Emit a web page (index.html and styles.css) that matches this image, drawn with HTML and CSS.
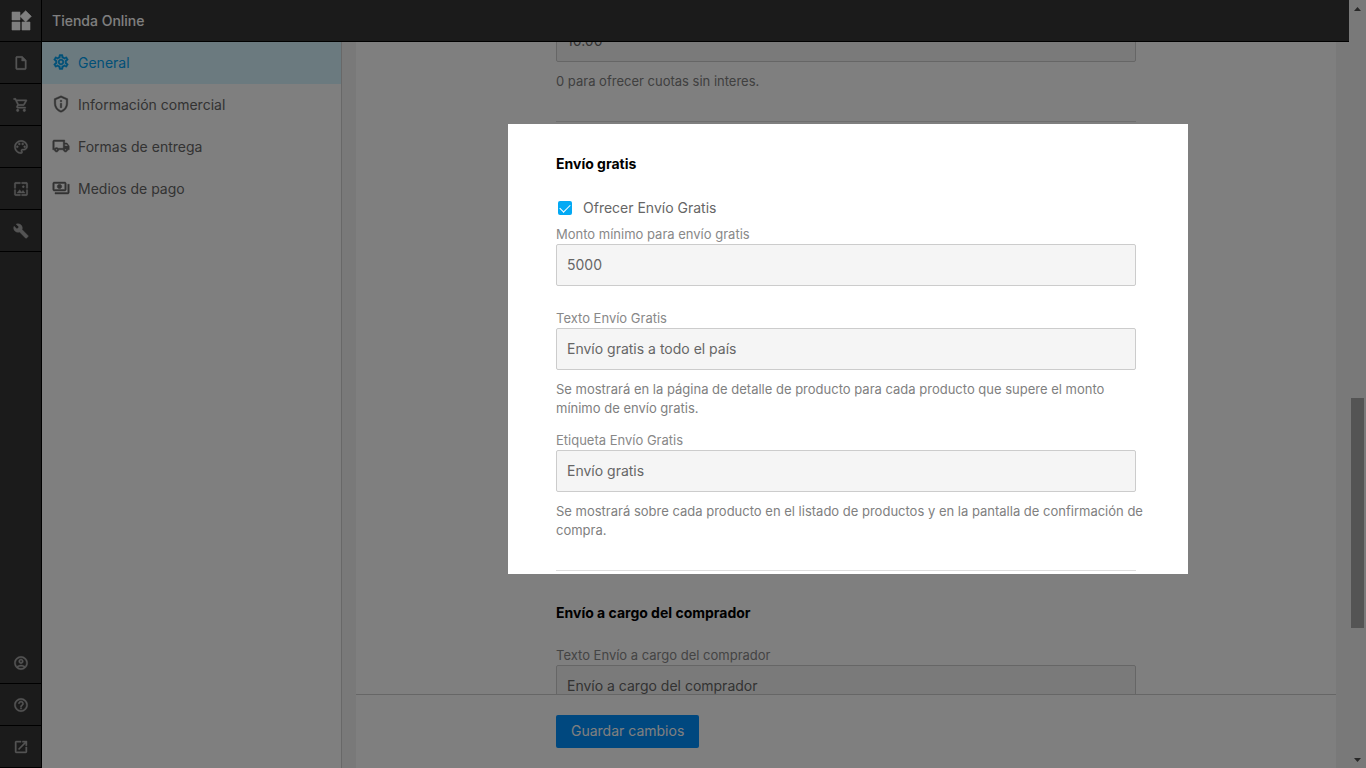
FILE: index.html
```html
<!DOCTYPE html>
<html lang="es">
<head>
<meta charset="utf-8">
<title>Tienda Online</title>
<link rel="stylesheet" href="styles.css">
</head>
<body>
<div class="app">
  <nav class="rail" aria-label="Secciones">
    <a class="rail-item logo" href="#" aria-label="Inicio"><svg viewBox="0 0 24 24"><path d="M13 13v8h8v-8h-8zM3 21h8v-8H3v8zM3 3v8h8V3H3zm13.660-1.310L11 7.340 16.660 13l5.660-5.660-5.660-5.650z"/></svg></a>
    <a class="rail-item" href="#" aria-label="Páginas"><svg viewBox="0 0 24 24"><path d="M14 2H6c-1.100 0-1.990.900-1.990 2L4 20c0 1.100.890 2 1.990 2H18c1.100 0 2-.900 2-2V8l-6-6zM6 20V4h7v5h5v11H6z"/></svg></a>
    <a class="rail-item" href="#" aria-label="Tienda"><svg viewBox="0 0 24 24"><path d="M15.550 13c.750 0 1.410-.410 1.750-1.030l3.580-6.490c.370-.660-.110-1.480-.870-1.480H5.210l-.940-2H1v2h2l3.600 7.590-1.350 2.440C4.520 15.370 5.480 17 7 17h12v-2H7l1.100-2h7.450zM6.160 6h12.150l-2.760 5H8.530L6.160 6zM7 18c-1.100 0-1.990.900-1.990 2S5.900 22 7 22s2-.900 2-2-.900-2-2-2zm10 0c-1.100 0-1.990.900-1.990 2s.890 2 1.990 2 2-.900 2-2-.900-2-2-2z"/></svg></a>
    <a class="rail-item" href="#" aria-label="Diseño"><svg viewBox="0 0 24 24"><path d="M12 22C6.490 22 2 17.510 2 12S6.490 2 12 2s10 4.040 10 9c0 3.310-2.690 6-6 6h-1.770c-.280 0-.500.220-.500.500 0 .120.050.230.130.330.410.470.640 1.060.640 1.670A2.500 2.500 0 0 1 12 22zm0-18c-4.410 0-8 3.590-8 8s3.590 8 8 8c.280 0 .500-.220.500-.500a.54.54 0 0 0-.140-.350c-.410-.460-.630-1.050-.630-1.650a2.500 2.500 0 0 1 2.500-2.500H16c2.210 0 4-1.790 4-4 0-3.860-3.590-7-8-7z"/><circle cx="6.500" cy="11.500" r="1.500"/><circle cx="9.500" cy="7.500" r="1.500"/><circle cx="14.500" cy="7.500" r="1.500"/><circle cx="17.500" cy="11.500" r="1.500"/></svg></a>
    <a class="rail-item" href="#" aria-label="Imágenes"><svg viewBox="0 0 24 24"><path d="M4 4h7V2H4c-1.100 0-2 .900-2 2v7h2V4zm6 9-4 5h12l-3-4-2.030 2.710L10 13zm7-4.500c0-.830-.670-1.500-1.500-1.500S14 7.670 14 8.500s.670 1.500 1.500 1.500S17 9.330 17 8.500zM20 2h-7v2h7v7h2V4c0-1.100-.900-2-2-2zm0 18h-7v2h7c1.100 0 2-.900 2-2v-7h-2v7zM4 13H2v7c0 1.100.900 2 2 2h7v-2H4v-7z"/></svg></a>
    <a class="rail-item" href="#" aria-label="Herramientas"><svg viewBox="0 0 24 24"><path d="M22.700 19l-9.100-9.100c.900-2.300.400-5-1.500-6.900-2-2-5-2.400-7.400-1.300L9 6 6 9 1.600 4.700C.400 7.100.900 10.100 2.900 12.100c1.900 1.900 4.600 2.400 6.900 1.500l9.100 9.100c.400.400 1 .400 1.400 0l2.300-2.300c.500-.400.500-1.100.100-1.400z"/></svg></a>
    <a class="rail-item rail-push" href="#" aria-label="Cuenta"><svg viewBox="0 0 24 24"><path d="M12 2C6.480 2 2 6.480 2 12s4.480 10 10 10 10-4.480 10-10S17.520 2 12 2zM7.350 18.500C8.660 17.560 10.260 17 12 17s3.340.560 4.650 1.500C15.340 19.440 13.740 20 12 20s-3.340-.560-4.650-1.500zm10.790-1.380C16.450 15.800 14.320 15 12 15s-4.450.800-6.140 2.120C4.700 15.730 4 13.950 4 12c0-4.420 3.580-8 8-8s8 3.580 8 8c0 1.950-.700 3.730-1.860 5.120zM12 6c-1.930 0-3.500 1.570-3.500 3.500S10.070 13 12 13s3.500-1.570 3.500-3.500S13.930 6 12 6zm0 5c-.830 0-1.500-.670-1.500-1.500S11.170 8 12 8s1.500.670 1.500 1.500S12.830 11 12 11z"/></svg></a>
    <a class="rail-item" href="#" aria-label="Ayuda"><svg viewBox="0 0 24 24"><path d="M11 18h2v-2h-2v2zm1-16C6.480 2 2 6.480 2 12s4.480 10 10 10 10-4.480 10-10S17.520 2 12 2zm0 18c-4.410 0-8-3.590-8-8s3.590-8 8-8 8 3.590 8 8-3.590 8-8 8zm0-14c-2.210 0-4 1.790-4 4h2c0-1.100.900-2 2-2s2 .900 2 2c0 2-3 1.750-3 5h2c0-2.250 3-2.500 3-5 0-2.210-1.790-4-4-4z"/></svg></a>
    <a class="rail-item" href="#" aria-label="Ver sitio"><svg viewBox="0 0 24 24"><path d="M19 19H5V5h7V3H5a2 2 0 0 0-2 2v14a2 2 0 0 0 2 2h14c1.100 0 2-.900 2-2v-7h-2v7zM14 3v2h3.590l-9.830 9.830 1.410 1.410L19 6.410V10h2V3h-7z"/></svg></a>
  </nav>

  <div class="shell">
    <header class="topbar"><h1 class="topbar-title">Tienda Online</h1></header>
    <div class="columns">
      <nav class="menu" aria-label="Tienda Online">
        <a class="menu-item active" href="#"><svg viewBox="0 0 24 24"><path d="M19.430 12.980c.040-.320.070-.640.070-.980s-.030-.660-.070-.980l2.110-1.650c.190-.150.240-.420.120-.640l-2-3.460c-.120-.220-.390-.300-.610-.220l-2.490 1c-.520-.400-1.080-.730-1.690-.980l-.380-2.650C14.460 2.180 14.250 2 14 2h-4c-.250 0-.460.180-.490.420l-.380 2.650c-.610.250-1.170.590-1.690.980l-2.490-1c-.230-.090-.490 0-.610.220l-2 3.460c-.130.220-.070.490.120.640l2.110 1.650c-.040.320-.070.650-.070.980s.030.660.070.980l-2.110 1.650c-.190.150-.240.420-.120.640l2 3.460c.120.220.390.300.610.220l2.490-1c.520.400 1.080.730 1.690.980l.380 2.650c.030.240.240.420.490.420h4c.250 0 .460-.180.490-.420l.380-2.650c.610-.250 1.170-.590 1.690-.980l2.490 1c.230.090.490 0 .610-.220l2-3.460c.120-.220.070-.490-.120-.640l-2.110-1.650zm-1.980-1.710c.040.310.050.520.050.730s-.020.430-.050.730l-.140 1.130 1.970 1.540-.700 1.210-2.310-.930-.900.680c-.430.320-.840.560-1.250.730l-1.060.430-.360 2.480h-1.400l-.350-2.480-1.060-.430c-.430-.180-.830-.410-1.230-.710l-.910-.700-2.310.930-.700-1.210 1.970-1.540-.140-1.130c-.030-.310-.050-.540-.050-.740s.020-.430.050-.730l.140-1.130-1.970-1.540.700-1.210 2.310.930.900-.680c.430-.320.840-.560 1.250-.730l1.060-.430.360-2.480h1.400l.350 2.480 1.060.430c.430.180.830.410 1.230.710l.910.700 2.310-.930.700 1.210-1.970 1.540.130 1.130zM12 8c-2.210 0-4 1.790-4 4s1.790 4 4 4 4-1.790 4-4-1.790-4-4-4zm0 6c-1.100 0-2-.900-2-2s.900-2 2-2 2 .900 2 2-.900 2-2 2z"/></svg>General</a>
        <a class="menu-item" href="#"><svg viewBox="0 0 24 24"><path d="M12 1 3 5v6c0 5.550 3.840 10.740 9 12 5.160-1.260 9-6.450 9-12V5l-9-4zm7 10c0 4.520-2.980 8.690-7 9.930-4.020-1.240-7-5.410-7-9.930V6.300l7-3.110 7 3.110V11zm-8 0h2v6h-2zm0-4h2v2h-2z"/></svg>Información comercial</a>
        <a class="menu-item" href="#"><svg viewBox="0 0 24 24"><path d="M20 8h-3V4H3c-1.100 0-2 .900-2 2v11h2c0 1.660 1.340 3 3 3s3-1.340 3-3h6c0 1.660 1.340 3 3 3s3-1.340 3-3h2v-5l-3-4zm-.500 1.500 1.960 2.500H17V9.500h2.500zM6 18c-.550 0-1-.450-1-1s.450-1 1-1 1 .450 1 1-.450 1-1 1zm2.220-3c-.550-.610-1.330-1-2.220-1s-1.670.390-2.220 1H3V6h12v9H8.220zM18 18c-.550 0-1-.450-1-1s.450-1 1-1 1 .450 1 1-.450 1-1 1z"/></svg>Formas de entrega</a>
        <a class="menu-item" href="#"><svg viewBox="0 0 24 24"><path d="M19 14V6c0-1.100-.900-2-2-2H3c-1.100 0-2 .900-2 2v8c0 1.100.900 2 2 2h14c1.100 0 2-.900 2-2zm-2 0H3V6h14v8zm-7-7c-1.660 0-3 1.340-3 3s1.340 3 3 3 3-1.340 3-3-1.340-3-3-3zm13 0v11c0 1.100-.900 2-2 2H4v-2h17V7h2z"/></svg>Medios de pago</a>
      </nav>

      <main class="content">
        <form class="card">
          <div class="scroll">
            <div class="fields">
              <div class="group scrolled">
                <input class="input" type="text" value="10.00" aria-label="Interés">
                <p class="help">0 para ofrecer cuotas sin interes.</p>
              </div>
              <section class="group">
                <h2 class="title">Envío gratis</h2>
                <label class="check"><input class="box" type="checkbox" checked>Ofrecer Envío Gratis</label>
                <label class="label" for="monto">Monto mínimo para envío gratis</label>
                <input class="input" id="monto" type="text" value="5000">
                <label class="label spaced" for="texto">Texto Envío Gratis</label>
                <input class="input" id="texto" type="text" value="Envío gratis a todo el país">
                <p class="help">Se mostrará en la página de detalle de producto para cada producto que supere el monto mínimo de envío gratis.</p>
                <label class="label after-help" for="etiqueta">Etiqueta Envío Gratis</label>
                <input class="input" id="etiqueta" type="text" value="Envío gratis">
                <p class="help">Se mostrará sobre cada producto en el listado de productos y en la pantalla de confirmación de compra.</p>
              </section>
              <section class="group">
                <h2 class="title">Envío a cargo del comprador</h2>
                <label class="label" for="cargo">Texto Envío a cargo del comprador</label>
                <input class="input" id="cargo" type="text" value="Envío a cargo del comprador">
              </section>
            </div>
          </div>
          <footer class="actions"><div class="actions-inner"><button class="save" type="button">Guardar cambios</button></div></footer>
        </form>
      </main>
    </div>
  </div>

  <div class="scrollbar" aria-hidden="true">
    <span class="arrow up"></span>
    <span class="track"><span class="thumb"></span></span>
    <span class="arrow down"></span>
  </div>
</div>
<div class="spotlight" aria-hidden="true"></div>
</body>
</html>
```

FILE: styles.css
```css
* { box-sizing: border-box; }

body {
  margin: 0;
  font-family: Inter, "Liberation Sans", sans-serif;
  font-size: 14px;
  color: #666;
  overflow: hidden;
}

h1, h2, p { margin: 0; }
a { color: inherit; text-decoration: none; }
svg {
  display: block;
  flex: none;
  fill: currentColor;
  stroke: currentColor;
  stroke-width: .6;
}

.app { display: flex; height: 100vh; background: #f2f2f2; }

/* Icon rail */
.rail {
  display: flex;
  flex-direction: column;
  flex: none;
  width: 42px;
  background: #363636;
  border-right: 1px solid #000;
  color: #a8a8a8;
}
.rail-item {
  display: flex;
  align-items: center;
  justify-content: center;
  height: 42px;
  border-bottom: 1px solid #000;
}
.rail-item svg { width: 16px; height: 16px; }
.logo { color: #fff; }
.rail-item.logo svg { width: 24px; height: 24px; }
.rail-push { margin-top: auto; }

.shell { display: flex; flex-direction: column; flex: 1; min-width: 0; }

.topbar {
  display: flex;
  align-items: center;
  flex: none;
  height: 42px;
  padding: 0 10px;
  background: #363636;
  border-bottom: 1px solid #000;
}
.topbar-title { font-size: 14px; font-weight: 500; color: #fff; }

.columns { display: flex; flex: 1; min-height: 0; }

/* Section menu */
.menu {
  flex: none;
  width: 300px;
  background: #fff;
  border-right: 1px solid #d0d0d0;
}
.menu-item {
  display: flex;
  align-items: center;
  gap: 8px;
  height: 42px;
  padding: 0 10px 2px;
  font-size: 14px;
}
.menu-item.active { background: #d6f5ff; color: #03a0f0; }
.menu-item svg { width: 18px; height: 18px; }

/* Settings form */
.content { display: flex; flex: 1; min-width: 0; padding: 0 13px 0 14px; }
.card { display: flex; flex-direction: column; flex: 1; min-width: 0; background: #fff; }
.scroll { flex: 1; min-height: 0; overflow: hidden; }
.fields, .actions-inner { max-width: 580px; margin: 0 auto; }

.group { padding-bottom: 30px; border-bottom: 1px solid #ddd; }
.scrolled { margin-top: -22px; }
.title {
  padding: 32px 0 22px;
  font-size: 14px;
  line-height: 20px;
  font-weight: 700;
  color: #000;
}
.check {
  display: flex;
  align-items: center;
  gap: 11px;
  height: 24px;
  margin-bottom: 4px;
  padding-left: 2px;
  font-size: 14px;
  line-height: 20px;
}
.box {
  display: grid;
  place-items: center;
  appearance: none;
  width: 14px;
  height: 14px;
  margin: 0;
  border-radius: 2px;
  background: #03a9f4;
}
.box::before {
  content: "";
  width: 9px;
  height: 5px;
  margin-bottom: 3px;
  border: solid #fff;
  border-width: 0 0 1px 1px;
  transform: rotate(-45deg);
}
.label { display: block; font-size: 13px; line-height: 20px; color: #888; }
.spaced { margin-top: 22px; }
.after-help { margin-top: 12px; }
.input {
  display: block;
  width: 100%;
  height: 42px;
  padding: 0 10px 2px;
  border: 1px solid #ccc;
  border-radius: 2px;
  background: #f5f5f5;
  font-family: inherit;
  font-size: 14px;
  color: #666;
}
.help { margin: 10px -12px 0 0; font-size: 13px; line-height: 19px; color: #808080; }

.actions { flex: none; padding: 20px 0; border-top: 1px solid #ccc; }
.save {
  display: block;
  height: 33px;
  padding: 0 15px 2px;
  border: 0;
  border-radius: 2px;
  background: #0090ff;
  color: #fff;
  font-family: inherit;
  font-size: 14px;
}

/* Window scrollbar */
.scrollbar {
  display: flex;
  flex-direction: column;
  align-items: center;
  flex: none;
  width: 17px;
  background: #f2f2f2;
}
.track { flex: 1; width: 13px; padding-top: 381px; }
.thumb { display: block; height: 230px; background: #a8a8a8; }
.arrow { width: 7px; height: 4px; margin: 7px 0 6px; background: #505050; }
.up { clip-path: polygon(50% 0, 100% 100%, 0 100%); }
.down { clip-path: polygon(0 0, 100% 0, 50% 100%); }

/* Tour highlight over the free shipping section */
.spotlight {
  position: absolute;
  top: 124px;
  left: calc(50% - 175px);
  width: 680px;
  height: 450px;
  box-shadow: 0 0 0 2000px rgba(0, 0, 0, .5);
  pointer-events: none;
}
```
